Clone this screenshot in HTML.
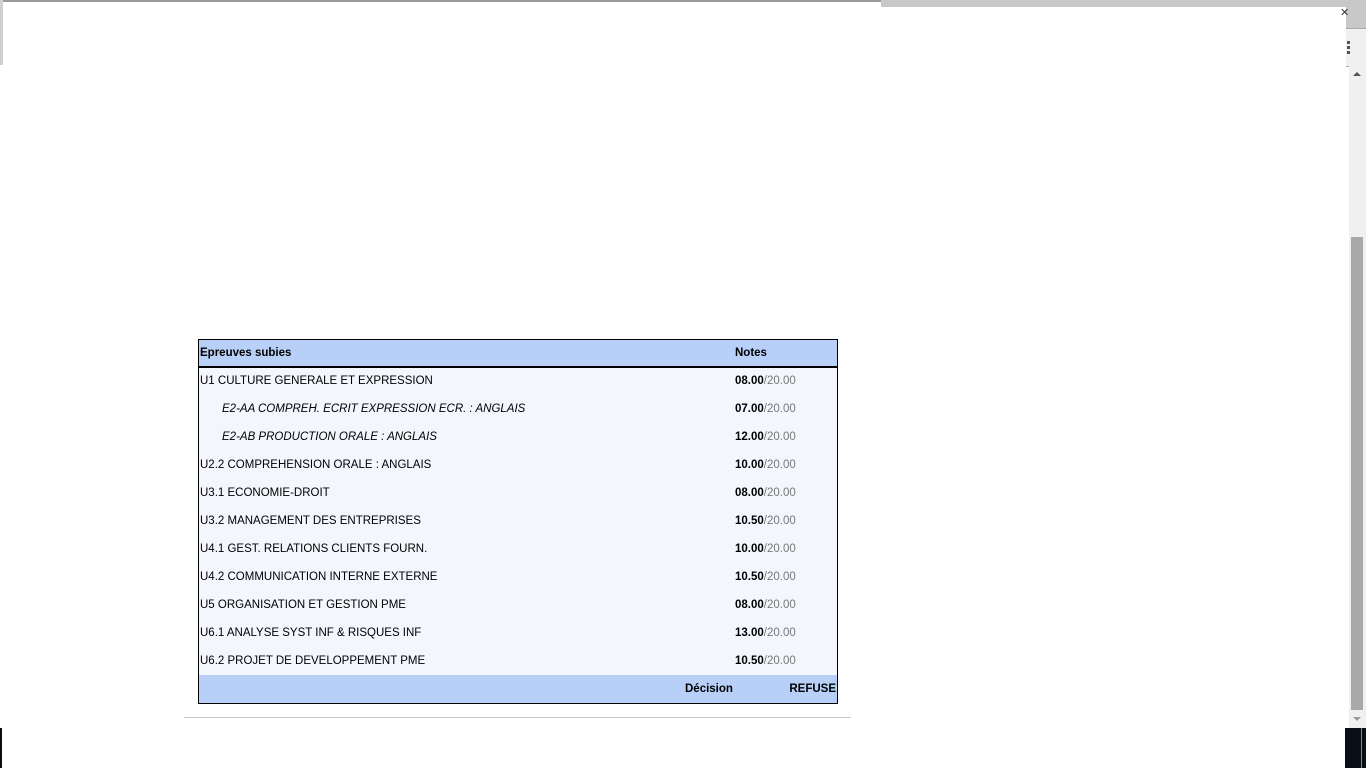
<!DOCTYPE html>
<html><head><meta charset="utf-8"><style>
body{margin:0;width:1366px;height:768px;background:#fff;position:relative;overflow:hidden;font-family:"Liberation Sans",Arial,sans-serif;font-size:11.5px;color:#000}
.a{position:absolute}
#t{position:absolute;left:198px;top:339px;width:638px;height:363px;border:1px solid #000;background:#f4f6fd}
.r{position:absolute;left:0;width:638px;height:28px;line-height:26px}
.l{position:absolute;left:1px}
.n{position:absolute;left:536px}
.n b{font-weight:bold}
.n span{color:#777}
.i{left:23px;font-style:italic}
</style></head><body>
<div class="a" style="left:0;top:0;width:1366px;height:2px;background:#9a9a9a"></div>
<div class="a" style="left:881px;top:0;width:465px;height:7px;background:#c8c8c8"></div>
<div class="a" style="left:0;top:0;width:3px;height:65px;background:#d0d0d0"></div>
<div class="a" style="left:1346px;top:0;width:20px;height:28px;background:#c8c8c8"></div>
<div class="a" style="left:1340px;top:6px;font-size:11px;color:#333">✕</div>
<div class="a" style="left:1346px;top:28px;width:20px;height:37px;background:#f0f0f0;border-top:1px solid #aaa;border-bottom:1px solid #aaa"></div>
<div class="a" style="left:1347px;top:41px;width:3px;height:3px;background:#555;box-shadow:0 5px #555,0 10px #555"></div>
<div class="a" style="left:1349px;top:66px;width:17px;height:662px;background:#f0f0f0"></div>
<div class="a" style="left:1353px;top:72px;width:0;height:0;border-left:4px solid transparent;border-right:4px solid transparent;border-bottom:4px solid #555"></div>
<div class="a" style="left:1351px;top:237px;width:12px;height:473px;background:#a8a8a8"></div>
<div class="a" style="left:1353px;top:717px;width:0;height:0;border-left:4px solid transparent;border-right:4px solid transparent;border-top:4px solid #999"></div>
<div class="a" style="left:1345px;top:728px;width:21px;height:40px;background:#0a0e16"></div>
<div class="a" style="left:1361px;top:728px;width:1px;height:40px;background:#888"></div>
<div class="a" style="left:0;top:728px;width:2px;height:40px;background:#0a0e16"></div>

<div id="t">
<div class="r" style="top:0;height:26px;line-height:26px;background:#b8d0f8;border-bottom:2px solid #000;font-weight:bold"><span class="l">Epreuves subies</span><span class="n">Notes</span></div>
<div class="r" style="top:28px"><span class="l">U1 CULTURE GENERALE ET EXPRESSION</span><span class="n"><b>08.00</b><span>/20.00</span></span></div>
<div class="r" style="top:56px"><span class="l i">E2-AA COMPREH. ECRIT EXPRESSION ECR. : ANGLAIS</span><span class="n"><b>07.00</b><span>/20.00</span></span></div>
<div class="r" style="top:84px"><span class="l i">E2-AB PRODUCTION ORALE : ANGLAIS</span><span class="n"><b>12.00</b><span>/20.00</span></span></div>
<div class="r" style="top:112px"><span class="l">U2.2 COMPREHENSION ORALE : ANGLAIS</span><span class="n"><b>10.00</b><span>/20.00</span></span></div>
<div class="r" style="top:140px"><span class="l">U3.1 ECONOMIE-DROIT</span><span class="n"><b>08.00</b><span>/20.00</span></span></div>
<div class="r" style="top:168px"><span class="l">U3.2 MANAGEMENT DES ENTREPRISES</span><span class="n"><b>10.50</b><span>/20.00</span></span></div>
<div class="r" style="top:196px"><span class="l">U4.1 GEST. RELATIONS CLIENTS FOURN.</span><span class="n"><b>10.00</b><span>/20.00</span></span></div>
<div class="r" style="top:224px"><span class="l">U4.2 COMMUNICATION INTERNE EXTERNE</span><span class="n"><b>10.50</b><span>/20.00</span></span></div>
<div class="r" style="top:252px"><span class="l">U5 ORGANISATION ET GESTION PME</span><span class="n"><b>08.00</b><span>/20.00</span></span></div>
<div class="r" style="top:280px"><span class="l">U6.1 ANALYSE SYST INF &amp; RISQUES INF</span><span class="n"><b>13.00</b><span>/20.00</span></span></div>
<div class="r" style="top:308px"><span class="l">U6.2 PROJET DE DEVELOPPEMENT PME</span><span class="n"><b>10.50</b><span>/20.00</span></span></div>
<div class="r" style="top:335px;line-height:28px;background:#b8d0f8;font-weight:bold"><span style="position:absolute;left:486px">Décision</span><span style="position:absolute;right:1px">REFUSE</span></div>
</div>
<div class="a" style="left:184px;top:717px;width:667px;height:1px;background:#c8c8c8"></div>
</body></html>
